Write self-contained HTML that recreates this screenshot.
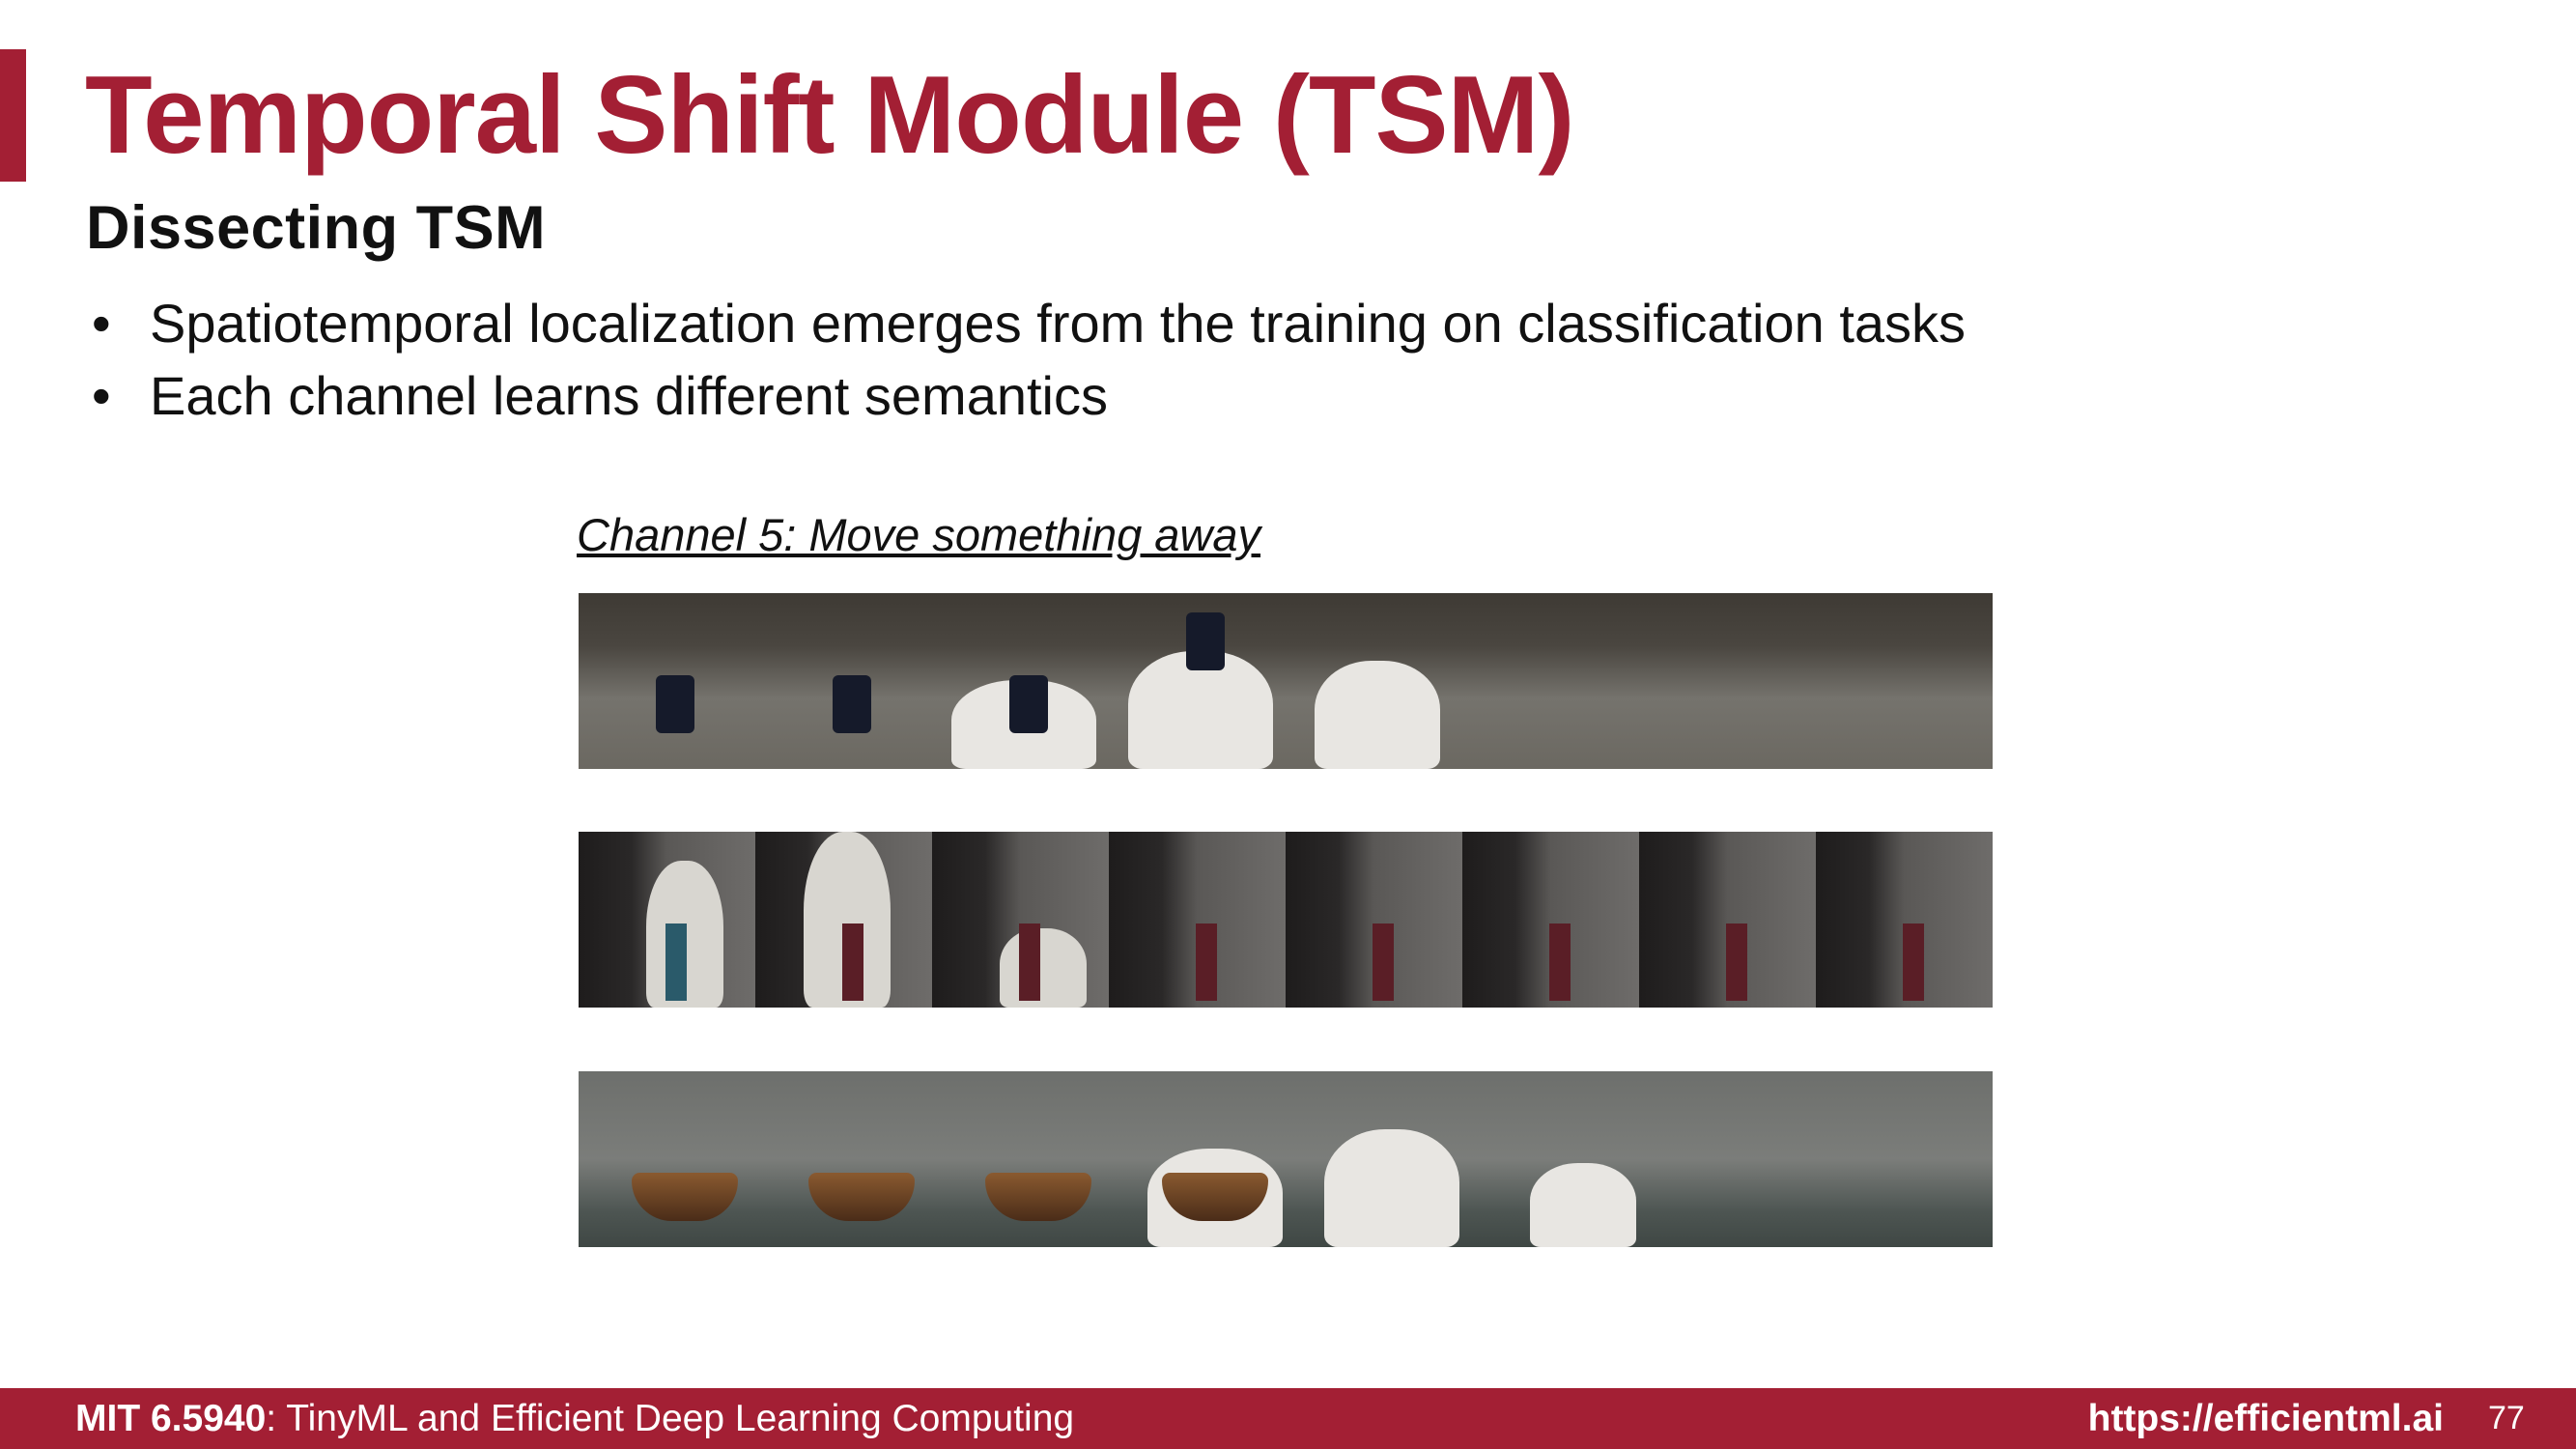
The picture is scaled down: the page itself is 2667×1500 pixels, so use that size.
<!DOCTYPE html>
<html><head><meta charset="utf-8"><style>
body{margin:0;width:2667px;height:1500px;background:#fff;position:relative;overflow:hidden;font-family:"Liberation Sans",Arial,sans-serif}
.bar{position:absolute;left:0;top:51px;width:27px;height:137px;background:#a31f34}
h1{position:absolute;left:88px;top:50px;margin:0;font-size:114px;font-weight:bold;color:#a31f34;letter-spacing:-1px;line-height:140px;white-space:nowrap}
h2{position:absolute;left:89px;top:198px;margin:0;font-size:63px;font-weight:bold;color:#111;line-height:76px;letter-spacing:0.5px}
.b{position:absolute;left:95px;font-size:56px;color:#111;line-height:64px}
.b span{position:absolute;left:60px;white-space:nowrap}
.cap{position:absolute;left:597px;top:526px;font-size:47px;font-style:italic;text-decoration:underline;color:#111;white-space:nowrap}
.row{position:absolute;left:599px;width:1464px;height:182px;display:flex}
.row>div{flex:1;position:relative;overflow:hidden}
.r1>div{background:linear-gradient(#3e3a34 0%,#4a4640 30%,#75736d 60%,#6b6861 100%)}
.r2>div{background:linear-gradient(90deg,#1e1c1c 0%,#2a2828 30%,#5a5856 50%,#6e6c6a 100%)}
.r3>div{background:linear-gradient(#6d6f6c 0%,#7b7d7a 50%,#4d5552 80%,#3f4744 100%)}
.blob{position:absolute;background:#e8e6e2;border-radius:45% 45% 10% 10%}
.mug{position:absolute;left:80px;top:85px;width:40px;height:60px;background:#151a2a;border-radius:6px}
.bask{position:absolute;left:55px;top:105px;width:110px;height:50px;background:linear-gradient(#8a5a30,#4a2c18);border-radius:10px 10px 50px 50px}
.stick{position:absolute;left:90px;top:95px;width:22px;height:80px;background:#5a1e26}
.foot{position:absolute;left:0;top:1437px;width:2667px;height:63px;background:#a31f34;color:#fff;font-size:39px;line-height:63px}
</style></head><body>
<div class="bar"></div>
<h1>Temporal Shift Module (TSM)</h1>
<h2>Dissecting TSM</h2>
<div class="b" style="top:303px">•<span>Spatiotemporal localization emerges from the training on classification tasks</span></div>
<div class="b" style="top:378px">•<span>Each channel learns different semantics</span></div>
<div class="cap">Channel 5: Move something away</div>
<div class="row r1" style="top:614px">
<div><div class="mug"></div></div><div><div class="mug"></div></div>
<div><div class="blob" style="left:20px;top:90px;width:150px;height:92px"></div><div class="mug"></div></div>
<div><div class="blob" style="left:20px;top:60px;width:150px;height:122px"></div><div class="mug" style="top:20px"></div></div>
<div><div class="blob" style="left:30px;top:70px;width:130px;height:112px"></div></div>
<div></div><div></div><div></div></div>
<div class="row r2" style="top:861px">
<div><div class="blob" style="left:70px;top:30px;width:80px;height:152px;background:#d8d6d0"></div><div class="stick" style="background:#2a5a6a"></div></div>
<div><div class="blob" style="left:50px;top:0;width:90px;height:182px;background:#d8d6d0"></div><div class="stick"></div></div>
<div><div class="blob" style="left:70px;top:100px;width:90px;height:82px;background:#d8d6d0"></div><div class="stick"></div></div>
<div><div class="stick"></div></div><div><div class="stick"></div></div><div><div class="stick"></div></div><div><div class="stick"></div></div><div><div class="stick"></div></div></div>
<div class="row r3" style="top:1109px">
<div><div class="bask"></div></div><div><div class="bask"></div></div><div><div class="bask"></div></div>
<div><div class="blob" style="left:40px;top:80px;width:140px;height:102px"></div><div class="bask"></div></div>
<div><div class="blob" style="left:40px;top:60px;width:140px;height:122px"></div></div>
<div><div class="blob" style="left:70px;top:95px;width:110px;height:87px"></div></div>
<div></div><div></div></div>
<div class="foot"><span style="position:absolute;left:78px"><b>MIT 6.5940</b>: TinyML and Efficient Deep Learning Computing</span><b style="position:absolute;right:137px">https://efficientml.ai</b><span style="position:absolute;left:2576px;font-size:34px">77</span></div>
</body></html>
